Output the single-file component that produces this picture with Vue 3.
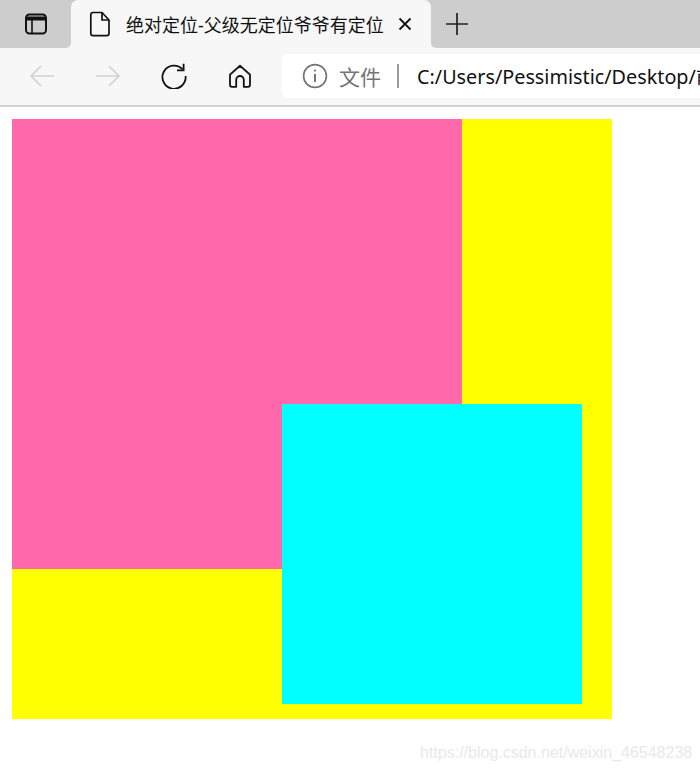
<template>
  <div class="page">
    <div class="tab-strip">
      <div class="tab-side">
        <svg width="24" height="24" viewBox="0 0 24 24" fill="none" stroke="#111" stroke-width="2">
          <rect x="2" y="2.5" width="20" height="19" rx="3.5" />
          <path d="M2 6.5h20" stroke-width="4" />
          <path d="M8 8v13" stroke-width="1.6" />
        </svg>
      </div>
      <div class="tab">
        <svg class="tab-file" width="22" height="26" viewBox="0 0 22 26" fill="none" stroke="#111" stroke-width="1.7" stroke-linejoin="round">
          <path d="M4 1.5h9l7 7.5v13.5a2.2 2.2 0 0 1-2.2 2.2H4a2.2 2.2 0 0 1-2.2-2.2V3.7A2.2 2.2 0 0 1 4 1.5z" />
          <path d="M13 1.5V9h7" />
        </svg>
        <span class="tab-title">绝对定位-父级无定位爷爷有定位</span>
        <svg class="tab-close" width="14" height="14" viewBox="0 0 14 14" stroke="#111" stroke-width="1.8">
          <path d="M1.5 1.5l11 11M12.5 1.5l-11 11" />
        </svg>
      </div>
      <div class="tab-rest">
        <svg width="22" height="22" viewBox="0 0 22 22" stroke="#222" stroke-width="1.7">
          <path d="M0 11h22M11 0v22" />
        </svg>
      </div>
    </div>

    <div class="toolbar">
      <div class="nav-btn back">
        <svg width="26" height="24" viewBox="0 0 26 24" fill="none" stroke="#d2d2d2" stroke-width="1.7">
          <path d="M25 12H2M12 2L2 12l10 10" />
        </svg>
      </div>
      <div class="nav-btn forward">
        <svg width="26" height="24" viewBox="0 0 26 24" fill="none" stroke="#d2d2d2" stroke-width="1.7">
          <path d="M1 12h23M14 2l10 10-10 10" />
        </svg>
      </div>
      <div class="nav-btn reload">
        <svg width="26" height="26" viewBox="0 0 26 26" fill="none" stroke="#111" stroke-width="1.8">
          <path d="M21.5 6.2A11.6 11.6 0 1 0 24.6 13" />
          <path d="M22.6 0.8v6.6H16" />
        </svg>
      </div>
      <div class="nav-btn home">
        <svg width="24" height="24" viewBox="0 0 24 24" fill="none" stroke="#111" stroke-width="1.8" stroke-linejoin="round">
          <path d="M12 1.8L2 10.6v10.2a2 2 0 0 0 2 2h4.2v-7a3.8 3.8 0 0 1 7.6 0v7H20a2 2 0 0 0 2-2V10.6z" />
        </svg>
      </div>
      <div class="address">
        <svg class="info" width="26" height="26" viewBox="0 0 26 26" fill="none" stroke="#757575" stroke-width="1.7">
          <circle cx="13" cy="13" r="11.4" />
          <path d="M13 11v8" stroke-width="2" />
          <circle cx="13" cy="7.6" r="1.1" fill="#757575" stroke="none" />
        </svg>
        <span class="scheme">文件</span>
        <span class="divider"></span>
        <span class="url">C:/Users/Pessimistic/Desktop/前端</span>
      </div>
    </div>

    <div class="content">
      <div class="grandpa">
        <div class="father"></div>
        <div class="son"></div>
      </div>
    </div>

    <span class="watermark">https://blog.csdn.net/weixin_46548238</span>
  </div>
</template>

<script setup>
</script>

<style>
html,
body {
  margin: 0;
  background: #fff;
  overflow: hidden;
}
</style>

<style scoped>
.page {
  position: relative;
  width: 700px;
  height: 771px;
  overflow: hidden;
  font-family: "Noto Sans", "Noto Sans CJK SC", sans-serif;
}

svg {
  flex-shrink: 0;
}

/* tab strip */
.tab-strip {
  display: flex;
  height: 48px;
  background: linear-gradient(#cdcdcd 50%, #f7f7f7 50%);
}

.tab-side {
  width: 71px;
  display: flex;
  align-items: center;
  padding-left: 24px;
  box-sizing: border-box;
  background: #cdcdcd;
  border-bottom-right-radius: 5px;
}

.tab {
  width: 360px;
  display: flex;
  align-items: center;
  box-sizing: border-box;
  padding-left: 18px;
  background: #f7f7f7;
  border-radius: 7px 7px 0 0;
}

.tab-title {
  margin-left: 15px;
  font-size: 18px;
  color: #111;
  white-space: nowrap;
}

.tab-close {
  margin-left: 14px;
}

.tab-rest {
  flex: 1;
  display: flex;
  align-items: center;
  padding-left: 15px;
  background: #cdcdcd;
  border-bottom-left-radius: 5px;
}

/* toolbar */
.toolbar {
  display: flex;
  align-items: center;
  height: 59px;
  box-sizing: border-box;
  background: #f7f7f7;
  border-bottom: 2px solid #d2d2d2;
  padding-bottom: 2px;
}

.nav-btn {
  display: flex;
  align-items: center;
  flex-shrink: 0;
}

.back {
  margin-left: 29px;
}

.forward {
  margin-left: 40px;
}

.reload {
  margin-left: 40px;
}

.home {
  margin-left: 41px;
}

.address {
  flex: 1;
  min-width: 0;
  height: 44px;
  margin-left: 30px;
  display: flex;
  align-items: center;
  padding-left: 20px;
  background: #fff;
  border-radius: 6px 0 0 6px;
  overflow: hidden;
  white-space: nowrap;
}

.scheme {
  margin-left: 11px;
  font-size: 21px;
  color: #757575;
}

.divider {
  width: 2px;
  height: 24px;
  margin-left: 16px;
  background: #9a9a9a;
  flex-shrink: 0;
}

.url {
  margin-left: 18px;
  font-size: 19.8px;
  color: #111;
}

/* demo boxes */
.content {
  padding: 12px;
}

.grandpa {
  position: relative;
  width: 600px;
  height: 600px;
  background: #ffff00;
}

.father {
  width: 450px;
  height: 450px;
  background: #ff69ac;
}

.son {
  position: absolute;
  right: 30px;
  bottom: 15px;
  width: 300px;
  height: 300px;
  background: #00ffff;
}

.watermark {
  position: absolute;
  left: 420px;
  top: 744px;
  font-family: "Liberation Sans", sans-serif;
  font-size: 16px;
  color: #e9e9e9;
  white-space: nowrap;
}
</style>
